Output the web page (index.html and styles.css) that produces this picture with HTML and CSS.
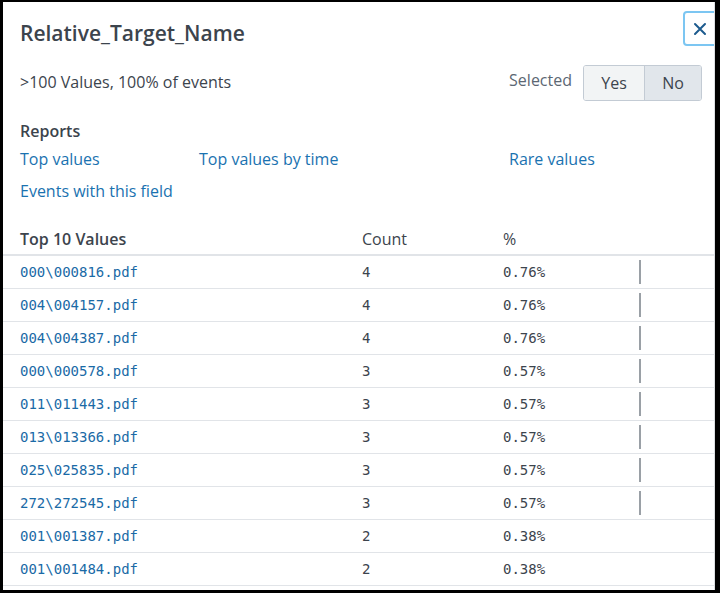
FILE: index.html
```html
<!DOCTYPE html>
<html lang="en">
<head>
<meta charset="utf-8">
<title>Relative_Target_Name</title>
<link rel="stylesheet" href="styles.css">
</head>
<body>
<div class="frame">
  <div class="panel">
    <button class="close" aria-label="Close">
      <svg width="16" height="16" viewBox="0 0 16 16"><path d="M3 3 L13 13 M13 3 L3 13" stroke="#1d5b8e" stroke-width="2" stroke-linecap="round" fill="none"/></svg>
    </button>
    <h1 class="title">Relative_Target_Name</h1>
    <div class="summary">
      <span class="summary-text">&gt;100 Values, 100% of events</span>
      <div class="selected">
        <span class="selected-label">Selected</span>
        <div class="toggle">
          <span class="toggle-btn">Yes</span>
          <span class="toggle-btn active">No</span>
        </div>
      </div>
    </div>
    <div class="reports">
      <div class="reports-title">Reports</div>
      <div class="links">
        <a class="link">Top values</a>
        <a class="link">Top values by time</a>
        <a class="link">Rare values</a>
        <a class="link">Events with this field</a>
      </div>
    </div>
    <div class="table">
      <div class="row head">
        <span class="c-name">Top 10 Values</span>
        <span class="c-count">Count</span>
        <span class="c-pct">%</span>
        <span class="c-bar"></span>
      </div>
      <div class="row"><span class="c-name val">000\000816.pdf</span><span class="c-count num">4</span><span class="c-pct num">0.76%</span><span class="c-bar"><i class="bar"></i></span></div>
      <div class="row"><span class="c-name val">004\004157.pdf</span><span class="c-count num">4</span><span class="c-pct num">0.76%</span><span class="c-bar"><i class="bar"></i></span></div>
      <div class="row"><span class="c-name val">004\004387.pdf</span><span class="c-count num">4</span><span class="c-pct num">0.76%</span><span class="c-bar"><i class="bar"></i></span></div>
      <div class="row"><span class="c-name val">000\000578.pdf</span><span class="c-count num">3</span><span class="c-pct num">0.57%</span><span class="c-bar"><i class="bar"></i></span></div>
      <div class="row"><span class="c-name val">011\011443.pdf</span><span class="c-count num">3</span><span class="c-pct num">0.57%</span><span class="c-bar"><i class="bar"></i></span></div>
      <div class="row"><span class="c-name val">013\013366.pdf</span><span class="c-count num">3</span><span class="c-pct num">0.57%</span><span class="c-bar"><i class="bar"></i></span></div>
      <div class="row"><span class="c-name val">025\025835.pdf</span><span class="c-count num">3</span><span class="c-pct num">0.57%</span><span class="c-bar"><i class="bar"></i></span></div>
      <div class="row"><span class="c-name val">272\272545.pdf</span><span class="c-count num">3</span><span class="c-pct num">0.57%</span><span class="c-bar"><i class="bar"></i></span></div>
      <div class="row"><span class="c-name val">001\001387.pdf</span><span class="c-count num">2</span><span class="c-pct num">0.38%</span><span class="c-bar"></span></div>
      <div class="row"><span class="c-name val">001\001484.pdf</span><span class="c-count num">2</span><span class="c-pct num">0.38%</span><span class="c-bar"></span></div>
    </div>
  </div>
</div>
</body>
</html>
```

FILE: styles.css
```css
html, body {
  margin: 0;
  padding: 0;
  background: #000;
}
.frame {
  width: 720px;
  height: 593px;
  box-sizing: border-box;
  padding: 2px 5px 3px 3px;
}
.panel {
  position: relative;
  width: 100%;
  height: 100%;
  background: #fff;
  overflow: hidden;
  border-right: 1px solid #dcdfe2;
  box-sizing: border-box;
  font-family: "Open Sans", "Lato", sans-serif;
  color: #3c444d;
}
.close {
  position: absolute;
  top: 9px;
  left: 680px;
  width: 36px;
  height: 35px;
  box-sizing: border-box;
  border: 2px solid #7cc6f2;
  border-radius: 4px;
  background: #fff;
  padding: 0 2px 0 0;
  display: flex;
  align-items: center;
  justify-content: center;
}
.title {
  margin: 0;
  padding: 19px 0 0 17px;
  font-size: 21px;
  line-height: 24px;
  font-weight: 600;
  color: #3c444d;
}
.summary {
  display: flex;
  justify-content: space-between;
  align-items: center;
  margin-top: 20px;
  padding: 0 12px 0 17px;
  height: 36px;
}
.summary-text {
  font-size: 16px;
  margin-top: -2px;
}
.selected {
  display: flex;
  align-items: center;
  gap: 11px;
}
.selected-label {
  font-size: 16px;
  color: #5c6773;
  margin-top: -7px;
}
.toggle {
  display: flex;
  height: 36px;
  border: 1px solid #c3cbd4;
  border-radius: 3px;
  box-sizing: border-box;
  overflow: hidden;
}
.toggle-btn {
  display: flex;
  align-items: center;
  justify-content: center;
  font-size: 16px;
  color: #3c444d;
  background: #f2f4f5;
  width: 60px;
}
.toggle-btn.active {
  background: #e1e6eb;
  width: 56px;
  border-left: 1px solid #c3cbd4;
}
.reports {
  padding: 20px 0 0 17px;
}
.reports-title {
  font-size: 16px;
  font-weight: 600;
  line-height: 20px;
}
.links {
  display: grid;
  grid-template-columns: 179px 310px auto;
  row-gap: 12px;
  margin-top: 8px;
}
.link {
  font-size: 16px;
  line-height: 20px;
  color: #1a72b0;
  cursor: pointer;
}
.table {
  margin-top: 21px;
}
.row {
  display: grid;
  grid-template-columns: 342px 141px 136px 1fr;
  padding-left: 17px;
  height: 33px;
  align-items: center;
  border-bottom: 1px solid #e1e4e8;
  box-sizing: border-box;
}
.row.head {
  height: 34px;
  padding-top: 2px;
  border-bottom: 2px solid #e1e4e8;
  font-size: 16px;
}
.head .c-name {
  font-weight: 600;
}
.val, .num {
  font-family: "DejaVu Sans Mono", monospace;
  font-size: 14px;
}
.val {
  color: #1a6aa6;
}
.num {
  color: #3c444d;
}
.c-bar {
  height: 100%;
  display: flex;
  align-items: center;
}
.bar {
  display: block;
  width: 2px;
  height: 24px;
  margin-top: -1px;
  background: #9aa0a6;
}
```
